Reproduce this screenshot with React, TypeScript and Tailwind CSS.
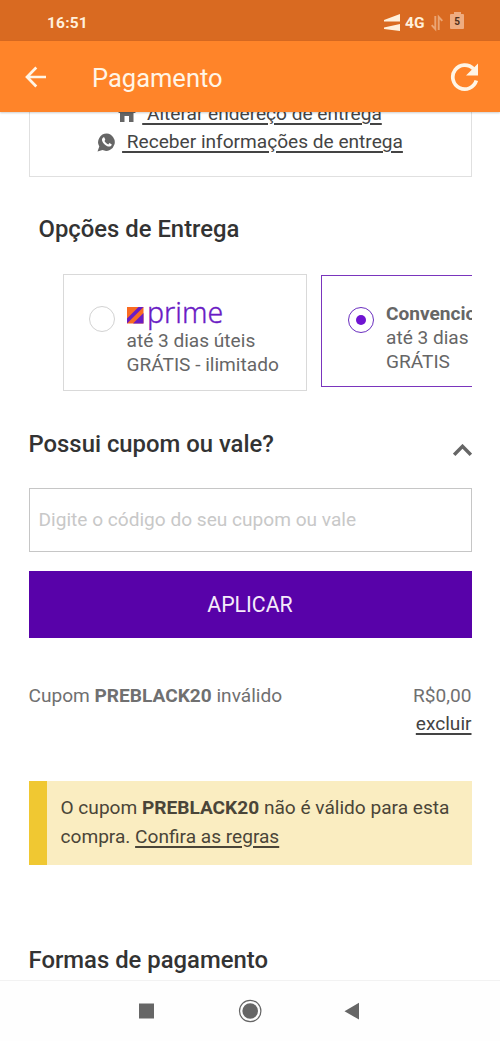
import React from "react";

function StatusBar() {
  return (
    <div className="flex h-[41px] shrink-0 items-center bg-[#d96a21] pt-[4px] pr-[36px] pl-[47px] text-[#fff0dc]">
      <span className="text-[15.5px] leading-5 font-bold tracking-[0.2px]">16:51</span>
      <svg className="ml-auto" width="16" height="20" viewBox="0 0 16 20" fill="currentColor">
        <path d="M0 8.5V7L16 1v7.500zM0 16v-1.500L16 11v7z" />
      </svg>
      <span className="ml-[5px] w-[22px] text-[15.5px] leading-5 font-bold">4G</span>
      <svg className="ml-[4px]" width="12" height="18" viewBox="0 0 12 18" fill="none" stroke="#eba573" strokeWidth="1.9">
        <path d="M4.3 2v13L.7 11.2M7.7 16V3l3.6 3.8" />
      </svg>
      <div className="mb-[4px] ml-[7px] flex w-[14px] flex-col items-center">
        <div className="h-[2px] w-[7px] bg-[#efac80]" />
        <div className="flex h-[15px] w-[14px] items-center justify-center rounded-[1px] bg-[#efac80] text-[10px] font-bold text-[#51301b]">5</div>
      </div>
    </div>
  );
}

function Header() {
  return (
    <header className="relative flex h-[71px] shrink-0 items-center bg-[#ff8429] pr-[20px] pl-[25px] text-[#fff5e6] shadow-[0_1px_2px_rgba(0,0,0,0.2)]">
      <svg width="22" height="22" viewBox="0 0 22 22" fill="none" stroke="currentColor" strokeWidth="2.7">
        <path d="M21 11H2.5M11.3 1.5 2 11l9.3 9.5" />
      </svg>
      <h1 className="mt-[2px] ml-[45px] text-[25.5px] leading-8 font-normal">Pagamento</h1>
      <svg className="ml-auto" width="30" height="30" viewBox="0 0 30 30" fill="none">
        <path d="M26.300 18.5A12 12 0 1 1 23.5 6.8" stroke="currentColor" strokeWidth="3.7" />
        <path d="M28 1.500v12H16z" fill="currentColor" />
      </svg>
    </header>
  );
}

function Radio({ checked = false }: { checked?: boolean }) {
  return (
    <span
      className={
        checked
          ? "flex size-[26px] shrink-0 items-center justify-center rounded-full border-[1.5px] border-[#6b2fc0]"
          : "flex size-[26px] shrink-0 items-center justify-center rounded-full border-[1.5px] border-[#d2d2d2]"
      }
    >
      {checked && <span className="size-[10px] rounded-full bg-[#6f13d2]" />}
    </span>
  );
}

function PrimeLogo() {
  return (
    <div className="flex h-[26px] items-start">
      <svg width="17" height="17" viewBox="0 0 17 17" className="mt-[4px] shrink-0">
        <path d="M0 0h16.500v16.500H0z" fill="#f96b21" />
        <path d="M0 16.500V11.500L11.500 0h5L0 16.500zM16.500 6v10.500H6z" fill="#6a1bc4" />
      </svg>
      <span className="-mt-[3px] ml-[3px] origin-left scale-x-[0.95] font-['Noto_Sans'] text-[30px] leading-[24px] font-light text-[#6a1bc4] [-webkit-text-stroke:0.35px_#6a1bc4]">prime</span>
    </div>
  );
}

function DeliveryOptions() {
  return (
    <div className="mt-[29px] flex items-start gap-[14px] overflow-hidden pl-[34px] text-[19.1px] leading-[24px] text-[#666]">
      <label className="flex h-[117px] w-[244px] shrink-0 gap-[12px] border-[1.5px] border-[#d9d9d9] pl-[25px]">
        <span className="mt-[31px]"><Radio /></span>
        <span className="mt-[28px]">
          <PrimeLogo />
          <span className="block">até 3 dias úteis</span>
          <span className="block">GRÁTIS - ilimitado</span>
        </span>
      </label>
      <label className="mt-[1px] flex h-[112px] w-[245px] shrink-0 gap-[12.500px] border-[1.5px] border-[#7a35bd] pl-[26px]">
        <span className="mt-[31px]"><Radio checked /></span>
        <span className="mt-[26px] whitespace-nowrap">
          <b className="block font-bold">Convencional</b>
          <span className="block">até 3 dias úteis</span>
          <span className="block">GRÁTIS</span>
        </span>
      </label>
    </div>
  );
}

export default function App() {
  return (
    <div className="flex h-[1041px] w-[500px] flex-col overflow-hidden bg-white font-[Roboto,sans-serif]">
      <StatusBar />
      <div className="flex min-h-0 flex-1 flex-col">
        <div className="z-10"><Header /></div>
        <main className="min-h-0 flex-1 overflow-hidden px-[28.5px]">
          <section className="-mt-[14px] flex h-[79px] flex-col items-center border-[1.5px] border-t-0 border-[#e0e0e0] text-[19.1px] leading-[28px] text-[#444]">
            <a className="mt-[2px] flex items-center whitespace-pre">
              <svg className="mr-[6px]" width="18" height="18" viewBox="0 0 18 18" fill="#666">
                <path d="M9 0 0 8h2v9h4.500v-6h4.500v6h4.500V8H18z" />
              </svg>
              <span className="underline decoration-[1.5px] underline-offset-[3px]"> Alterar endereço de entrega</span>
            </a>
            <a className="flex items-center whitespace-pre">
              <svg className="mr-[6px]" width="19" height="19" viewBox="0 0 19 19">
                <path d="M9.8.5a8.7 8.7 0 0 0-7.5 13.1L.5 18.5l5-1.4A8.7 8.7 0 1 0 9.8.5Z" fill="#666" />
                <path d="M6.2 4.5c.8-.5 1.3 0 1.6.9l.5 1.3-.8 1.3c.8 1.6 2 2.7 3.8 3.4l1.1-1.3 2.2 1.1c.3.6-.4 1.9-1.4 2.3-2.5.7-7.4-2.3-8.2-6.3-.1-1 .3-2.1 1.2-2.7Z" fill="white" />
              </svg>
              <span className="underline decoration-[1.5px] underline-offset-[3px]"> Receber informações de entrega</span>
            </a>
          </section>

          <h2 className="mt-[36px] pl-[10px] text-[23.85px] leading-[32px] font-medium text-[#333]">Opções de Entrega</h2>
          <DeliveryOptions />

          <button className="mt-[37px] flex h-[32px] w-full items-center justify-between text-[#333]">
            <span className="text-[23.85px] leading-[32px] font-medium">Possui cupom ou vale?</span>
            <svg className="mt-[12px]" width="19" height="13" viewBox="0 0 19 13" fill="none" stroke="#666" strokeWidth="3.4">
              <path d="m1.2 10.800 8.3-8.5 8.3 8.5" />
            </svg>
          </button>

          <input
            className="mt-[28px] block h-[64px] w-full border-[1.5px] border-[#c6c6c6] px-[9px] pb-[2px] text-[19.1px] placeholder:text-[#c8c8c8]"
            placeholder="Digite o código do seu cupom ou vale"
          />
          <button className="mt-[19px] block h-[67px] w-full bg-[#5802a9] text-[21.3px] text-[#f5eafa]">APLICAR</button>

          <div className="mt-[44px] flex justify-between text-[19.1px] leading-[28px] text-[#707070]">
            <p>Cupom <b className="font-bold">PREBLACK20</b> inválido</p>
            <div className="text-right">
              <p>R$0,00</p>
              <a className="block text-[#444] underline decoration-[1.5px] underline-offset-[3px]">excluir</a>
            </div>
          </div>

          <aside className="mt-[43px] h-[84px] border-l-[18px] border-[#f0c832] bg-[#faedc1] pt-[13px] pl-[14px] text-[19.1px] leading-[28.5px] whitespace-nowrap text-[#4a4538]">
            O cupom <b className="font-bold">PREBLACK20</b> não é válido para esta
            <br />
            compra. <a className="underline decoration-[1.5px] underline-offset-[3px]">Confira as regras</a>
          </aside>

          <h2 className="mt-[79px] text-[23.85px] leading-[32px] font-medium text-[#333]">Formas de pagamento</h2>
        </main>
      </div>
      <nav className="flex h-[61px] shrink-0 items-center justify-center border-t-[1.5px] border-[#f2f2f2] bg-[#fefefe]">
        <svg width="222" height="24" viewBox="0 0 222 24" fill="#666">
          <path d="M0 4.5h15v15H0zM220 3.800v16.800L205.500 12.200z" />
          <circle cx="111.200" cy="12" r="7.800" />
          <circle cx="111.200" cy="12" r="10.700" fill="none" stroke="#666" strokeWidth="1.2" />
        </svg>
      </nav>
    </div>
  );
}
